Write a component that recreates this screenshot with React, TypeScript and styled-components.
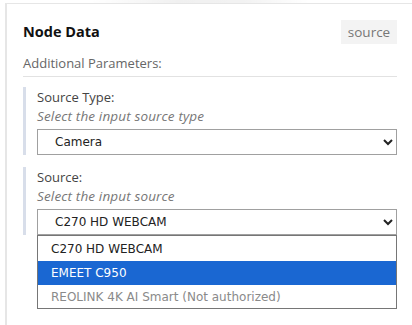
import React from "react";
import styled, { createGlobalStyle } from "styled-components";

const Global = createGlobalStyle`
  html, body { margin: 0; padding: 0; background: #ffffff; }
  body { font-family: "Open Sans", "Liberation Sans", sans-serif; }
  * { box-sizing: border-box; }
`;

const Page = styled.div`
  position: relative;
  width: 412px;
  height: 325px;
  padding: 3px 0 0 5px;
  overflow: hidden;
`;

const TopShade = styled.div`
  position: absolute;
  left: 90px;
  top: 0;
  width: 220px;
  height: 3px;
  background: linear-gradient(to right, rgba(0,0,0,0), rgba(0,0,0,0.06) 40%, rgba(0,0,0,0.05) 70%, rgba(0,0,0,0));
`;

const Panel = styled.div`
  height: 100%;
  border-left: 2px solid #e6e6e6;
  border-top: 1px solid #e6e6e6;
  padding: 16px 15px 0 16px;
`;

const Header = styled.div`
  display: flex;
  align-items: center;
  justify-content: space-between;
  height: 24px;
`;

const Title = styled.h3`
  margin: 0;
  font-size: 14.5px;
  font-weight: 700;
  color: #111;
  line-height: 24px;
`;

const Badge = styled.span`
  display: inline-flex;
  align-items: center;
  justify-content: center;
  width: 56px;
  height: 24px;
  background: #f3f3f3;
  color: #777;
  font-size: 13.5px;
`;

const SubHeading = styled.div`
  margin-top: 10px;
  padding-bottom: 4px;
  border-bottom: 1px solid #e2e2e2;
  font-size: 13px;
  line-height: 18px;
  color: #666;
`;

const Section = styled.div<{ $top: number }>`
  margin-top: ${(p) => p.$top}px;
  border-left: 3px solid #d8deea;
  padding-left: 11px;
  padding-top: 1px;
`;

const Label = styled.div`
  font-size: 13px;
  color: #444;
  line-height: 18px;
`;

const Hint = styled.div`
  font-size: 13.5px;
  font-style: italic;
  color: #777;
  line-height: 18px;
  letter-spacing: 0.15px;
  margin-top: 1px;
`;

const SelectWrap = styled.div<{ $gap: number }>`
  position: relative;
  margin-top: ${(p) => p.$gap}px;
`;

const Select = styled.select`
  display: block;
  width: 100%;
  height: 26px;
  border: 1px solid #a0a0a0;
  border-radius: 0;
  background: #fff;
  padding: 0 8px 0 13px;
  font-family: "DejaVu Sans", sans-serif;
  font-size: 12px;
  color: #222;
  outline: none;
`;

const Popup = styled.div`
  position: absolute;
  left: 0;
  right: 0;
  top: 26px;
  border: 1px solid #767676;
  background: #fff;
  z-index: 2;
`;

const Option = styled.div<{ $h: number; $active?: boolean; $disabled?: boolean }>`
  height: ${(p) => p.$h}px;
  display: flex;
  align-items: center;
  padding-left: 13px;
  font-family: "DejaVu Sans", sans-serif;
  font-size: 12px;
  background: ${(p) => (p.$active ? "#1a67d2" : "transparent")};
  color: ${(p) => (p.$active ? "#fff" : p.$disabled ? "#8a8a8a" : "#222")};
`;

export default function App() {
  return (
    <>
      <Global />
      <Page>
        <TopShade />
        <Panel>
          <Header>
            <Title>Node Data</Title>
            <Badge>source</Badge>
          </Header>
          <SubHeading>Additional Parameters:</SubHeading>
          <Section $top={10}>
            <Label>Source Type:</Label>
            <Hint>Select the input source type</Hint>
            <SelectWrap $gap={4}>
              <Select defaultValue="camera">
                <option value="camera">Camera</option>
              </Select>
            </SelectWrap>
          </Section>
          <Section $top={12}>
            <Label>Source:</Label>
            <Hint>Select the input source</Hint>
            <SelectWrap $gap={4}>
              <Select defaultValue="c270">
                <option value="c270">C270 HD WEBCAM</option>
              </Select>
              <Popup>
                <Option $h={25}>C270 HD WEBCAM</Option>
                <Option $h={24} $active>EMEET C950</Option>
                <Option $h={23} $disabled>REOLINK 4K AI Smart (Not authorized)</Option>
              </Popup>
            </SelectWrap>
          </Section>
        </Panel>
      </Page>
    </>
  );
}
